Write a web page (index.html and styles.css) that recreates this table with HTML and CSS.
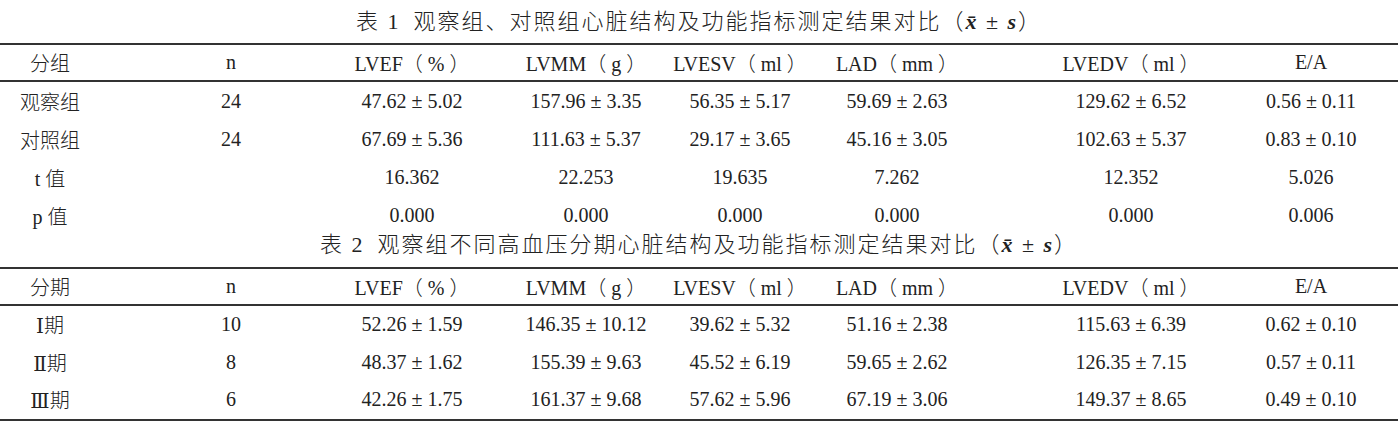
FILE: index.html
```html
<!DOCTYPE html>
<html lang="zh-CN">
<head>
<meta charset="utf-8">
<title>心脏结构及功能指标测定结果对比</title>
<link rel="stylesheet" href="styles.css">
</head>
<body>
<div class="caption cap1">表 1&ensp;观察组、对照组心脏结构及功能指标测定结果对比（<span class="var">x̄</span> ± <span class="var">s</span>）</div>
<div class="table t1">
  <div class="row head">
    <div class="cell">分组</div><div class="cell">n</div><div class="cell">LVEF（ % ）</div><div class="cell">LVMM（ g ）</div><div class="cell">LVESV（ ml ）</div><div class="cell">LAD（ mm ）</div><div class="cell">LVEDV（ ml ）</div><div class="cell">E/A</div>
  </div>
  <div class="row">
    <div class="cell">观察组</div><div class="cell">24</div><div class="cell">47.62 ± 5.02</div><div class="cell">157.96 ± 3.35</div><div class="cell">56.35 ± 5.17</div><div class="cell">59.69 ± 2.63</div><div class="cell">129.62 ± 6.52</div><div class="cell">0.56 ± 0.11</div>
  </div>
  <div class="row">
    <div class="cell">对照组</div><div class="cell">24</div><div class="cell">67.69 ± 5.36</div><div class="cell">111.63 ± 5.37</div><div class="cell">29.17 ± 3.65</div><div class="cell">45.16 ± 3.05</div><div class="cell">102.63 ± 5.37</div><div class="cell">0.83 ± 0.10</div>
  </div>
  <div class="row">
    <div class="cell">t 值</div><div class="cell"></div><div class="cell">16.362</div><div class="cell">22.253</div><div class="cell">19.635</div><div class="cell">7.262</div><div class="cell">12.352</div><div class="cell">5.026</div>
  </div>
  <div class="row">
    <div class="cell">p 值</div><div class="cell"></div><div class="cell">0.000</div><div class="cell">0.000</div><div class="cell">0.000</div><div class="cell">0.000</div><div class="cell">0.000</div><div class="cell">0.006</div>
  </div>
</div>
<div class="caption cap2">表 2&ensp;观察组不同高血压分期心脏结构及功能指标测定结果对比（<span class="var">x̄</span> ± <span class="var">s</span>）</div>
<div class="table t2">
  <div class="row head">
    <div class="cell">分期</div><div class="cell">n</div><div class="cell">LVEF（ % ）</div><div class="cell">LVMM（ g ）</div><div class="cell">LVESV（ ml ）</div><div class="cell">LAD（ mm ）</div><div class="cell">LVEDV（ ml ）</div><div class="cell">E/A</div>
  </div>
  <div class="row">
    <div class="cell">Ⅰ期</div><div class="cell">10</div><div class="cell">52.26 ± 1.59</div><div class="cell">146.35 ± 10.12</div><div class="cell">39.62 ± 5.32</div><div class="cell">51.16 ± 2.38</div><div class="cell">115.63 ± 6.39</div><div class="cell">0.62 ± 0.10</div>
  </div>
  <div class="row">
    <div class="cell">Ⅱ期</div><div class="cell">8</div><div class="cell">48.37 ± 1.62</div><div class="cell">155.39 ± 9.63</div><div class="cell">45.52 ± 6.19</div><div class="cell">59.65 ± 2.62</div><div class="cell">126.35 ± 7.15</div><div class="cell">0.57 ± 0.11</div>
  </div>
  <div class="row">
    <div class="cell">Ⅲ期</div><div class="cell">6</div><div class="cell">42.26 ± 1.75</div><div class="cell">161.37 ± 9.68</div><div class="cell">57.62 ± 5.96</div><div class="cell">67.19 ± 3.06</div><div class="cell">149.37 ± 8.65</div><div class="cell">0.49 ± 0.10</div>
  </div>
</div>
</body>
</html>
```

FILE: styles.css
```css
html, body {
  margin: 0;
  padding: 0;
  background: #fff;
}

body {
  font-family: "Liberation Serif", "DejaVu Serif", "Noto Sans CJK SC", serif;
  font-weight: 300;
  color: #222;
  width: 1398px;
}

.caption {
  text-align: center;
  font-size: 22px;
  letter-spacing: 2px;
  white-space: nowrap;
}

.cap1 {
  height: 43px;
  line-height: 43px;
}

.cap2 {
  height: 33px;
  line-height: 22px;
}

.var {
  font-style: italic;
  font-weight: bold;
}

.table {
  border-top: 2px solid #333;
}

.t2 {
  border-bottom: 2px solid #333;
}

.row {
  display: grid;
  grid-template-columns: 100px 262px 100px 248px 60px 254px 214px 146px;
  height: 38px;
  font-size: 20px;
}

.t2 .row {
  height: 37.5px;
}

.row.head {
  height: 35px;
  border-bottom: 2px solid #333;
}

.cell {
  display: flex;
  justify-content: center;
  align-items: center;
  min-width: 0;
  white-space: nowrap;
}
```
